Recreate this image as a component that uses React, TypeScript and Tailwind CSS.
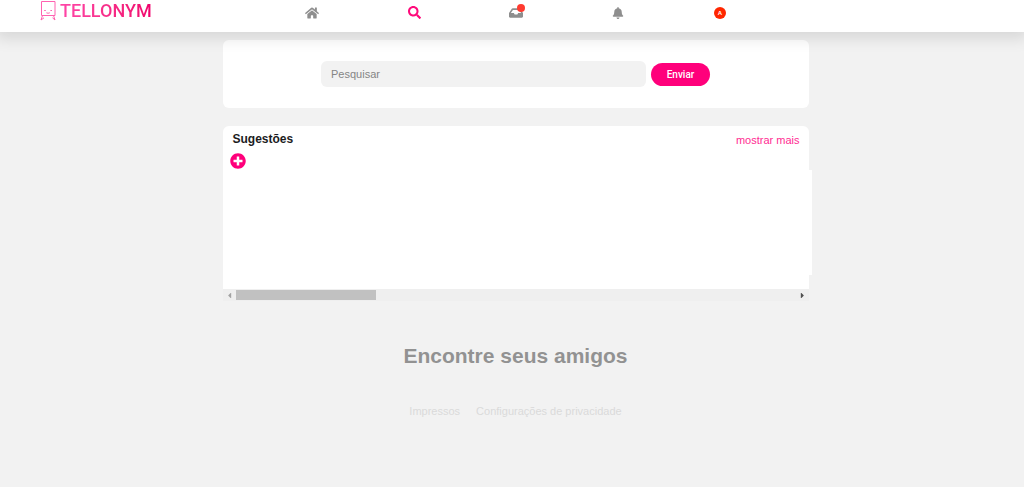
import type { ReactNode } from "react";
import {
  FaBell,
  FaCaretLeft,
  FaCaretRight,
  FaHome,
  FaInbox,
  FaPlusCircle,
  FaSearch,
} from "react-icons/fa";

interface NavItemProps {
  label: string;
  active?: boolean;
  children: ReactNode;
}

function NavItem({ label, active, children }: NavItemProps) {
  return (
    <a
      href="#"
      aria-label={label}
      className={
        active
          ? "flex items-center justify-center text-[#ff0a7b]"
          : "flex items-center justify-center text-[#8e8e8e]"
      }
    >
      {children}
    </a>
  );
}

function Logo() {
  return (
    <a href="#" className="flex w-28 shrink-0 items-center gap-1">
      <svg
        viewBox="0 0 16 21"
        className="h-[21px] w-4 shrink-0"
        fill="none"
        stroke="#ff62b0"
        strokeWidth="1"
      >
        <path d="M1.5 1.5h13.5v14h-13.5z" />
        <path d="M2.5 15.5L1 20M13.5 15.5l1.5 4.5M1 20L4 17.8M15 20L12.5 17.8" />
        <path d="M4.2 10.5h1.6M10.4 10.5h1.6M6.4 12.8q1.7.9 3.4 0" />
      </svg>
      <span className="bg-linear-to-r from-[#ff45a8] to-[#f0006c] bg-clip-text font-['Roboto',sans-serif] text-lg leading-5 font-medium text-transparent">
        TELLONYM
      </span>
    </a>
  );
}

function Header() {
  return (
    <header className="relative z-10 flex h-8 items-start bg-white pl-10 shadow-[0_2px_16px_4px_rgba(0,0,0,0.12)]">
      <Logo />
      <nav className="ml-[109px] grid h-[25px] w-[510px] grid-cols-5">
        <NavItem label="Início">
          <FaHome className="size-3.5" />
        </NavItem>
        <NavItem label="Pesquisar" active>
          <FaSearch className="size-[13px]" />
        </NavItem>
        <NavItem label="Mensagens">
          <span className="relative">
            <FaInbox className="size-3.5" />
            <span className="absolute -top-0.5 -right-0.5 size-2 rounded-full bg-[#ff3b30]" />
          </span>
        </NavItem>
        <NavItem label="Notificações">
          <FaBell className="size-3" />
        </NavItem>
        <NavItem label="Perfil">
          <span className="flex size-3 items-center justify-center rounded-full bg-[#ff2600] text-[6px] leading-none font-bold text-white">
            A
          </span>
        </NavItem>
      </nav>
    </header>
  );
}

function SearchCard() {
  return (
    <section className="rounded-md bg-white py-[21px]">
      <form
        className="flex items-center justify-center gap-[5px]"
        onSubmit={(e) => e.preventDefault()}
      >
        <input
          type="text"
          aria-label="Pesquisar"
          placeholder="Pesquisar"
          className="h-[26px] w-[325px] rounded-md bg-[#f2f2f2] px-2.5 text-[11px] outline-none placeholder:text-[#858585]"
        />
        <button
          type="submit"
          className="h-[23px] w-[59px] rounded-full bg-[#ff007b] font-['Roboto',sans-serif] text-[10px] font-medium text-white"
        >
          Enviar
        </button>
      </form>
    </section>
  );
}

function Suggestions() {
  return (
    <section className="mt-[18px]">
      <div className="rounded-t-md bg-white pb-3.5">
        <div className="flex h-[26px] items-center justify-between pr-[9px] pl-2.5">
          <h2 className="text-xs font-bold text-[#1c1c1e]">Sugestões</h2>
          <a href="#" className="pt-0.5 text-[11px] text-[#ff2c92]">
            mostrar mais
          </a>
        </div>
        <button
          type="button"
          aria-label="Adicionar"
          className="ml-[7px] block h-[18px] text-[#ff007b]"
        >
          <FaPlusCircle className="size-4" />
        </button>
        <div className="-mr-[3px] h-[105px] bg-white" />
      </div>
      <div className="flex h-3 items-center bg-[#efefef] px-0.5">
        <FaCaretLeft className="size-[9px] text-[#a3a3a3]" />
        <div className="mx-0.5 h-[10px] flex-1">
          <div className="h-full w-1/4 bg-[#c1c1c1]" />
        </div>
        <FaCaretRight className="size-[9px] text-[#505050]" />
      </div>
    </section>
  );
}

export default function App() {
  return (
    <div className="min-h-screen bg-[#f2f2f2] font-['Liberation_Sans',Arial,sans-serif]">
      <Header />
      <div className="pl-[7px]">
        <main className="mx-auto max-w-[586px] pt-2">
          <SearchCard />
          <Suggestions />
          <h1 className="mt-[41px] text-center text-[21px] leading-7 font-bold text-[#929292]">
            Encontre seus amigos
          </h1>
        </main>
        <footer className="mt-[31px] flex justify-center gap-4 pb-8 text-[11px] leading-5 text-[#dadada]">
          <a href="#">Impressos</a>
          <a href="#">Configurações de privacidade</a>
        </footer>
      </div>
    </div>
  );
}
